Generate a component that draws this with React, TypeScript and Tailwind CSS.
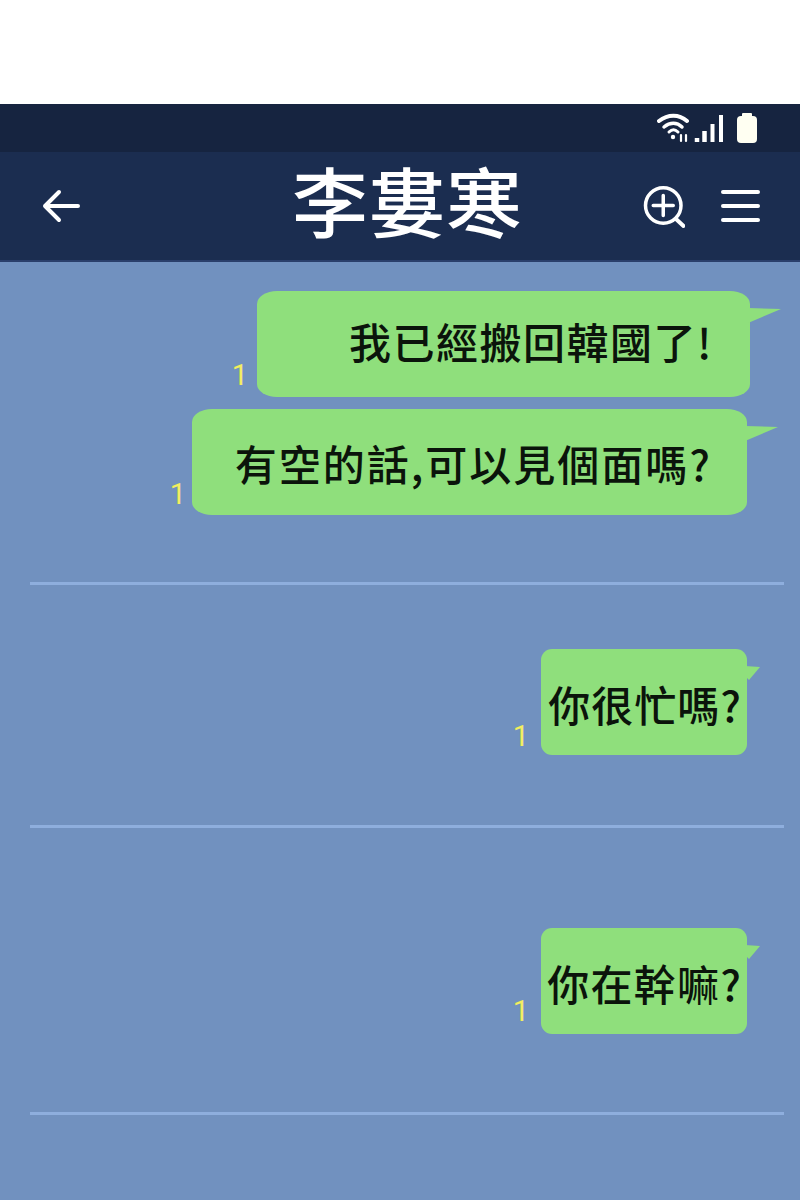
const cjk = "font-['Noto_Sans_CJK_TC','Noto_Sans_CJK_SC',sans-serif]";

const Tail = ({ wide }: { wide?: boolean }) =>
  wide ? (
    <svg className="absolute left-full top-[15px] -ml-[2px]" width="34" height="20" viewBox="0 0 34 20">
      <path d="M0 2 L33 3 L0 17 Z" fill="#8fdf7c" />
    </svg>
  ) : (
    <svg className="absolute left-full top-[15px] -ml-[2px]" width="16" height="18" viewBox="0 0 16 18">
      <path d="M0 2 L15 3 L4 16 L0 12 Z" fill="#8fdf7c" />
    </svg>
  );

const Bubble = ({
  text,
  className,
  boxClass,
  textClass,
  markClass,
  wide,
}: {
  text: string;
  className: string;
  boxClass: string;
  textClass: string;
  markClass: string;
  wide?: boolean;
}) => (
  <div className={`flex items-end justify-end ${className}`}>
    <span className={`font-['Roboto',sans-serif] text-[29px] font-normal leading-[28px] text-[#f2ee5e] ${markClass}`}>1</span>
    <div
      className={`relative flex h-[106px] items-center justify-end bg-[#8fdf7c] ${boxClass} ${
        wide ? 'rounded-[20px/13px] pr-[37px]' : 'rounded-[11px] pr-[5px]'
      }`}
    >
      <span className={`${cjk} whitespace-nowrap text-[42px] font-medium leading-none text-[#0b140b] ${textClass}`}>{text}</span>
      <Tail wide={wide} />
    </div>
  </div>
);

const Divider = ({ className }: { className: string }) => (
  <div className={`ml-[30px] h-[3px] w-[754px] bg-[#8eaedd] ${className}`} />
);

export default function App() {
  return (
    <div className="flex h-[1200px] w-[800px] flex-col overflow-hidden bg-white">
      <div className="h-[104px] shrink-0" />

      {/* status bar */}
      <div className="flex h-[48px] shrink-0 items-center justify-end bg-[#162440] pr-[41px]">
        <svg width="102" height="34" viewBox="0 0 102 34" fill="none" stroke="#fff" strokeLinecap="round" className="mt-[2px]">
          <path d="M2 9 C11 2 22 2 30 9" strokeWidth="4" />
          <path d="M7 15 C13 10 20 10 25 15" strokeWidth="3.5" />
          <path d="M12 20 C15 17 18 17 21 20" strokeWidth="3" />
          <circle cx="16" cy="25" r="2.2" fill="#fff" stroke="none" />
          <path d="M24 23 V29 M29 23 V29" strokeWidth="2.2" />
          <path d="M40 26 V30" strokeWidth="4.5" strokeLinecap="butt" />
          <path d="M47.5 19 V30" strokeWidth="4.5" strokeLinecap="butt" />
          <path d="M55.5 12 V30" strokeWidth="4" strokeLinecap="butt" />
          <path d="M64 3 V30" strokeWidth="4" strokeLinecap="butt" />
          <rect x="80" y="4" width="20" height="27" rx="4" fill="#fffff2" stroke="none" />
          <rect x="85" y="1" width="10" height="5" rx="1" fill="#fffff2" stroke="none" />
        </svg>
      </div>

      {/* nav */}
      <div className="relative flex h-[108px] shrink-0 items-center bg-[#1b2d50] pl-[42px] pr-[40px]">
        <svg width="40" height="36" viewBox="0 0 40 36" fill="none" stroke="#fff" strokeWidth="4" strokeLinecap="round" strokeLinejoin="round">
          <path d="M3 18 H36 M17 4 L3 18 L17 32" />
        </svg>
        <span className={`${cjk} mb-[15px] ml-[210px] text-[76px] font-medium leading-none tracking-[1px] text-white`}>李婁寒</span>
        <div className="ml-auto flex items-center gap-[36px]">
          <svg width="44" height="44" viewBox="0 0 44 44" fill="none" stroke="#fff" strokeWidth="3.5" strokeLinecap="round" className="mt-[3px]">
            <circle cx="22.25" cy="19.5" r="17.75" />
            <path d="M22.25 9.5 V29.5 M12.25 19.5 H32.25" />
            <path d="M35 33 L42.5 40" strokeWidth="4" />
          </svg>
          <div className="flex w-[39px] flex-col gap-[10px]">
            <div className="h-[4px] rounded-full bg-white" />
            <div className="h-[4px] rounded-full bg-white" />
            <div className="h-[4px] rounded-full bg-white" />
          </div>
        </div>
      </div>

      {/* chat */}
      <div className="flex-1 border-t-2 border-[#2a3f6b] bg-[#7191bf] pr-[50px]">
        <Bubble
          text="我已經搬回韓國了!"
          wide
          className="mt-[29px]"
          boxClass="w-[493px]"
          textClass="mb-[6px] tracking-[1.5px]"
          markClass="mb-[8px] mr-[9px]"
        />
        <Bubble
          text="有空的話,可以見個面嗎?"
          wide
          className="mt-[12px] mr-[3px]"
          boxClass="w-[555px]"
          textClass="-mr-[2px] mt-[2px] tracking-[2px]"
          markClass="mb-[7px] mr-[6px]"
        />
        <Divider className="mt-[67px]" />
        <Bubble
          text="你很忙嗎?"
          className="mt-[64px] mr-[3px]"
          boxClass="w-[206px]"
          textClass="mt-[4px] tracking-[1px]"
          markClass="mb-[5px] mr-[12px]"
        />
        <Divider className="mt-[70px]" />
        <Bubble
          text="你在幹嘛?"
          className="mt-[100px] mr-[3px]"
          boxClass="w-[206px]"
          textClass="mt-[4px] tracking-[1.2px]"
          markClass="mb-[9px] mr-[12px]"
        />
        <Divider className="mt-[78px]" />
      </div>
    </div>
  );
}
